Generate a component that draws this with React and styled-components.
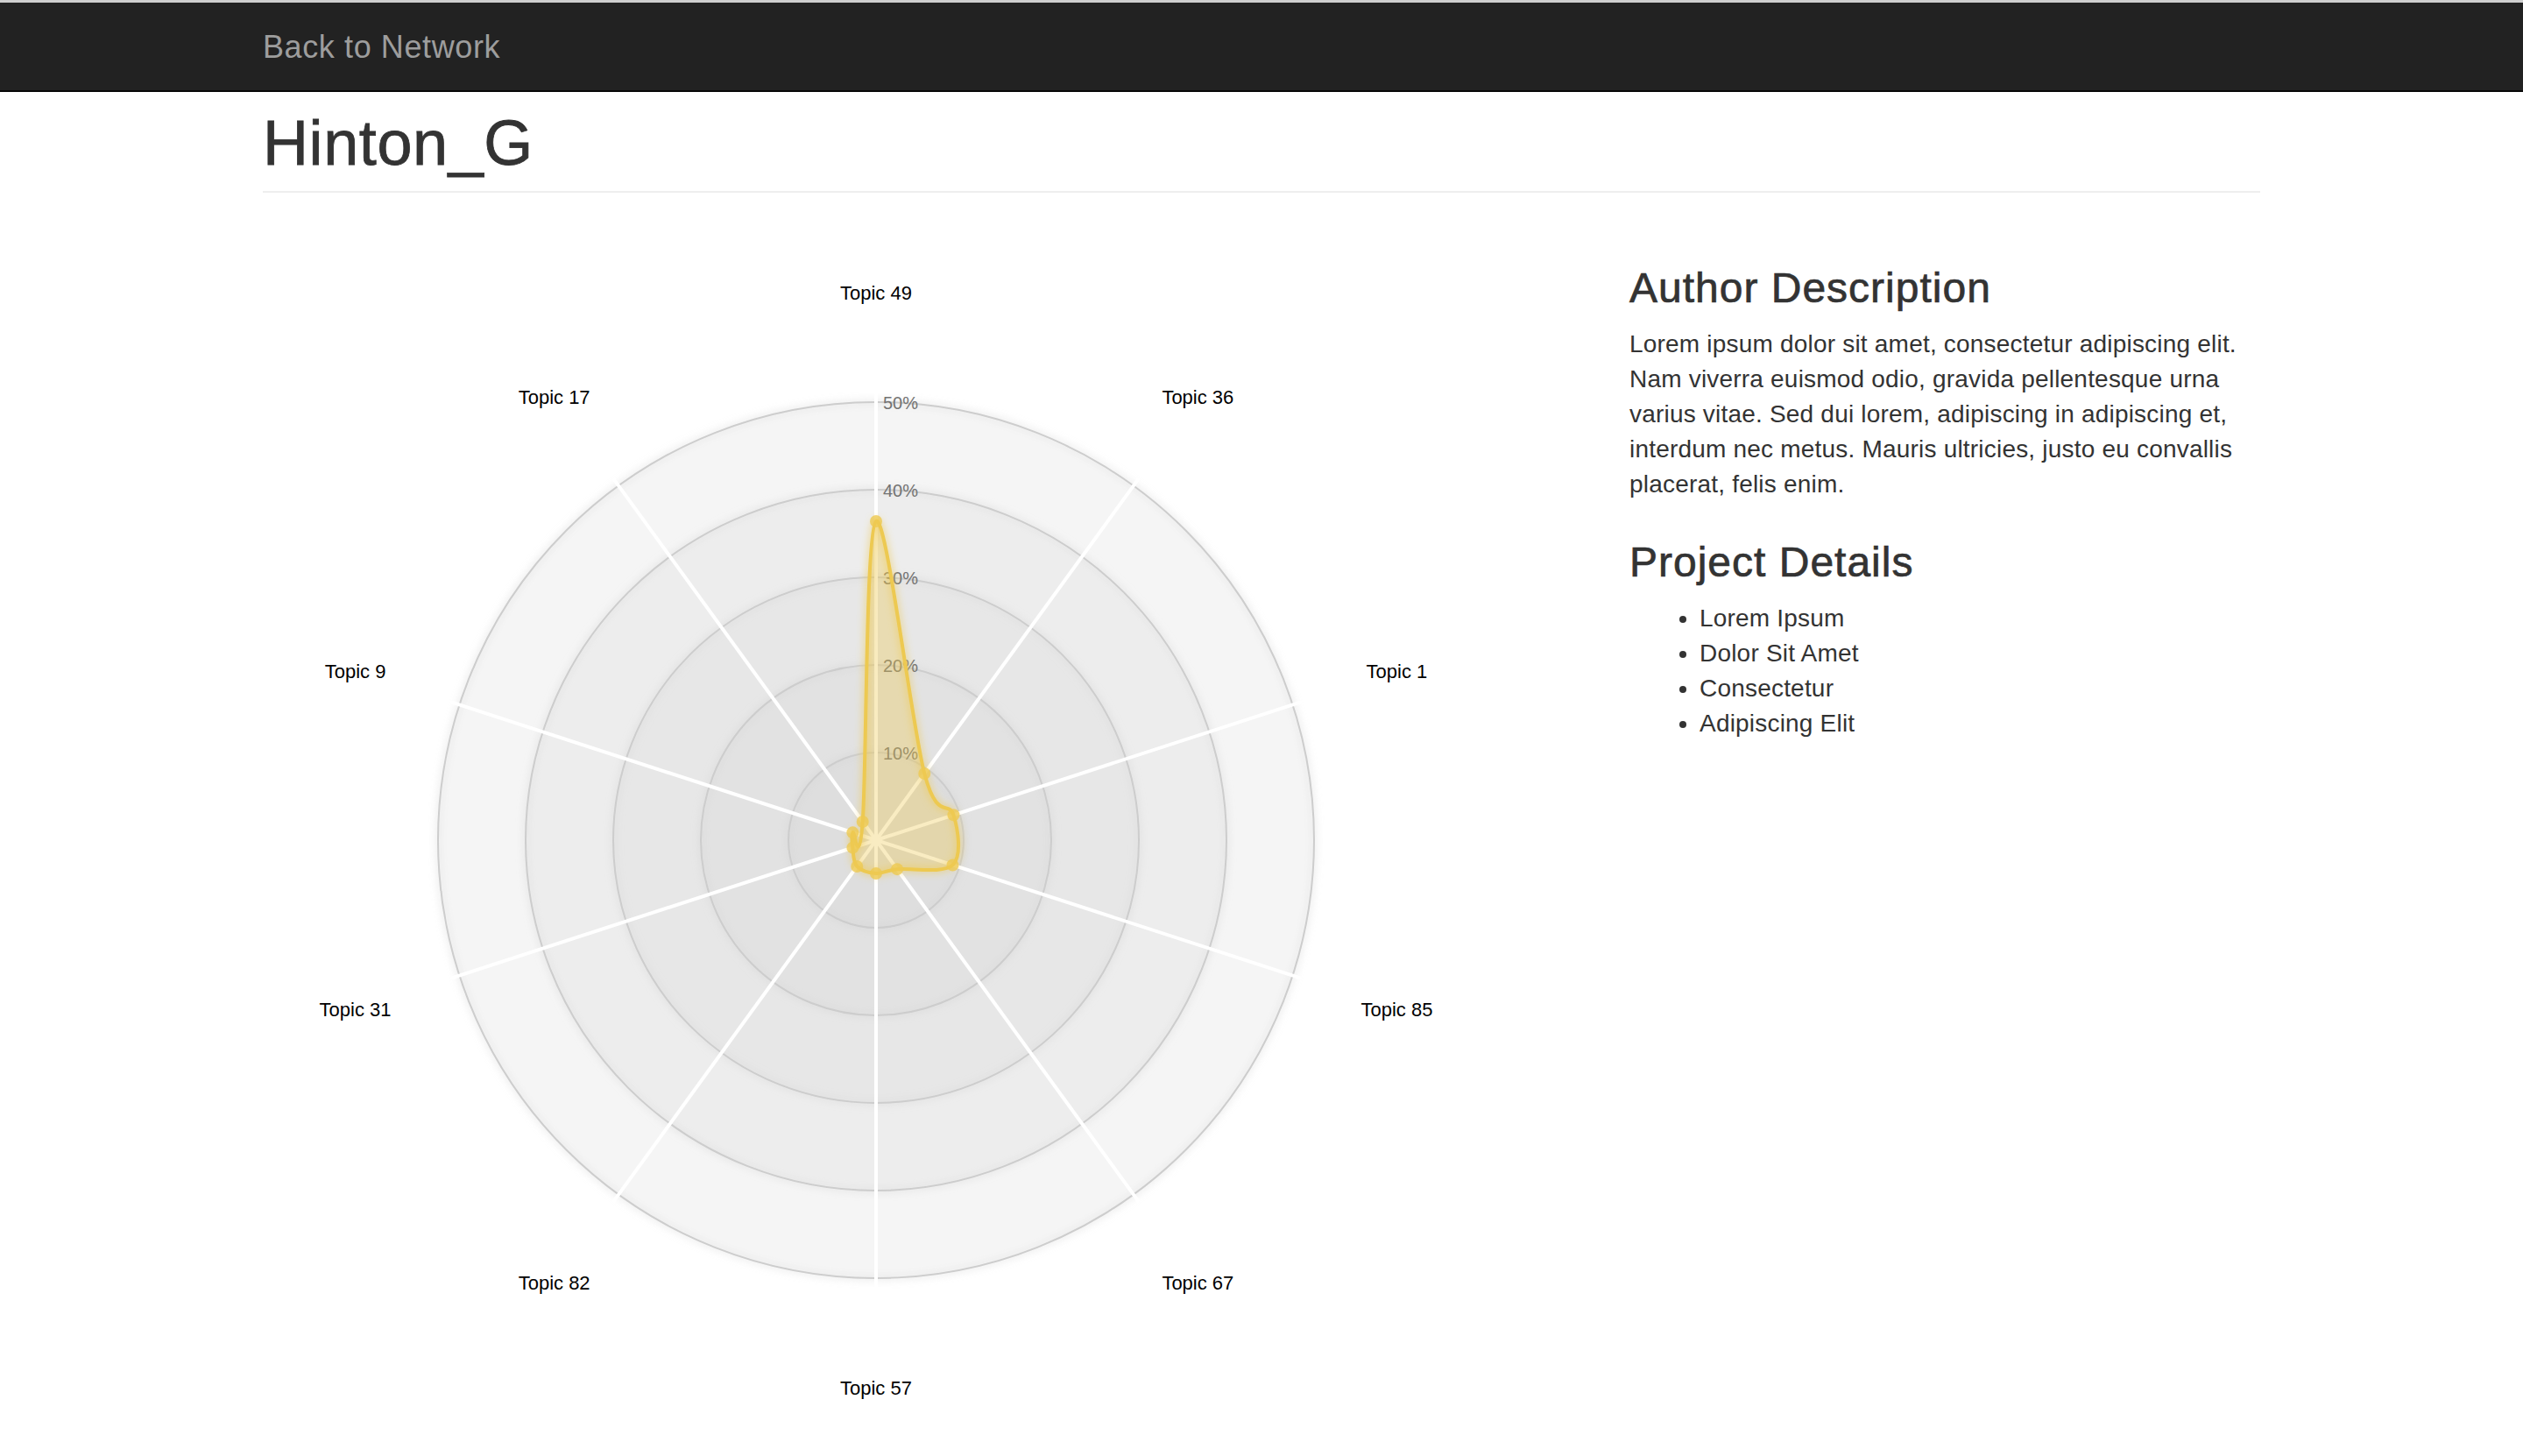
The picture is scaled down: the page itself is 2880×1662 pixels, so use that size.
import React from "react";
import styled, { createGlobalStyle } from "styled-components";

const GlobalStyle = createGlobalStyle`
  body {
    margin: 0;
    background: #fff;
    color: #333;
    font-family: "Liberation Sans", Arial, Helvetica, sans-serif;
  }
`;

const TopEdge = styled.div`
  height: 3px;
  background: #cfcfcf;
`;

const Navbar = styled.nav`
  background: #222;
  border-bottom: 2px solid #080808;
  height: 100px;
`;

const Container = styled.div`
  width: 2280px;
  margin: 0 auto;
  padding: 0 30px;
`;

const Brand = styled.a`
  display: inline-block;
  color: #9d9d9d;
  font-size: 36px;
  line-height: 40px;
  letter-spacing: 0.6px;
  padding-top: 31px;
  text-decoration: none;
`;

const PageHeader = styled.div`
  margin-top: 18px;
  padding-bottom: 15px;
  border-bottom: 2px solid #eee;
`;

const Title = styled.h1`
  margin: 0;
  font-size: 72px;
  font-weight: 500;
  line-height: 80px;
  letter-spacing: 0.6px;
  color: #333;
  -webkit-text-stroke: 0.8px #333;
`;

const Row = styled.div`
  display: grid;
  grid-template-columns: 1500px 720px;
  column-gap: 60px;
  margin-top: 39px;
`;

const ChartCol = styled.div`
  svg {
    display: block;
  }
`;

const InfoCol = styled.div``;

const SectionTitle = styled.h3`
  margin: ${(p) => (p.$first ? "43px" : "42px")} 0 18px;
  font-size: 48px;
  font-weight: 500;
  line-height: 53px;
  letter-spacing: 1px;
  color: #333;
  -webkit-text-stroke: 0.7px #333;
`;

const Body = styled.p`
  margin: 0 0 20px;
  font-size: 28px;
  line-height: 40px;
  letter-spacing: 0.2px;
`;

const List = styled.ul`
  margin: 0;
  padding-left: 80px;
  font-size: 28px;
  line-height: 40px;
  letter-spacing: 0.2px;
`;

const topics = [
  { axis: "Topic 49", value: 0.364 },
  { axis: "Topic 36", value: 0.094 },
  { axis: "Topic 1", value: 0.093 },
  { axis: "Topic 85", value: 0.092 },
  { axis: "Topic 67", value: 0.041 },
  { axis: "Topic 57", value: 0.038 },
  { axis: "Topic 82", value: 0.037 },
  { axis: "Topic 31", value: 0.028 },
  { axis: "Topic 9", value: 0.028 },
  { axis: "Topic 17", value: 0.026 },
];

// closed cardinal spline, tension 0 (same as d3.curveCardinalClosed)
const cardinalClosed = (pts) => {
  const n = pts.length;
  const k = 1 / 6;
  let d = `M${pts[0][0]},${pts[0][1]}`;
  for (let i = 0; i < n; i++) {
    const p0 = pts[(i - 1 + n) % n];
    const p1 = pts[i];
    const p2 = pts[(i + 1) % n];
    const p3 = pts[(i + 2) % n];
    const c1 = [p1[0] + (p2[0] - p0[0]) * k, p1[1] + (p2[1] - p0[1]) * k];
    const c2 = [p2[0] - (p3[0] - p1[0]) * k, p2[1] - (p3[1] - p1[1]) * k];
    d += `C${c1[0]},${c1[1]} ${c2[0]},${c2[1]} ${p2[0]},${p2[1]}`;
  }
  return d + "Z";
};

const RadarChart = ({ data }) => {
  const size = 1400;
  const cx = 700;
  const cy = 700;
  const radius = 500;
  const maxValue = 0.5;
  const levels = 5;
  const slice = (Math.PI * 2) / data.length;
  const color = "#EDC951";

  const at = (r, i) => [
    cx + r * Math.cos(slice * i - Math.PI / 2),
    cy + r * Math.sin(slice * i - Math.PI / 2),
  ];

  const pts = data.map((d, i) => at((d.value / maxValue) * radius, i));
  const blob = cardinalClosed(pts);
  const rings = [5, 4, 3, 2, 1];

  return (
    <svg width={size} height={size}>
      <defs>
        <filter id="glow">
          <feGaussianBlur stdDeviation="5" result="coloredBlur" />
          <feMerge>
            <feMergeNode in="coloredBlur" />
            <feMergeNode in="SourceGraphic" />
          </feMerge>
        </filter>
      </defs>

      {rings.map((l) => (
        <circle
          key={l}
          cx={cx}
          cy={cy}
          r={(radius / levels) * l}
          fill="#CDCDCD"
          fillOpacity="0.1"
          stroke="#CDCDCD"
          strokeWidth="2"
          filter="url(#glow)"
        />
      ))}

      {rings.map((l) => (
        <text
          key={l}
          x={cx + 8}
          y={cy - (radius / levels) * l}
          dy="0.4em"
          fontSize="20"
          fill="#737373"
          fontFamily="Liberation Sans, Arial, sans-serif"
        >
          {l * 10}%
        </text>
      ))}

      {data.map((d, i) => {
        const [x2, y2] = at(radius * 1.02, i);
        const [lx, ly] = at(radius * 1.25, i);
        return (
          <g key={d.axis}>
            <line x1={cx} y1={cy} x2={x2} y2={y2} stroke="#fff" strokeWidth="4" />
            <text
              x={lx}
              y={ly}
              dy="0.35em"
              textAnchor="middle"
              fontSize="22"
              fill="#000"
              fontFamily="Liberation Sans, Arial, sans-serif"
            >
              {d.axis}
            </text>
          </g>
        );
      })}

      <path d={blob} fill={color} fillOpacity="0.35" />
      <path
        d={blob}
        fill="none"
        stroke={color}
        strokeWidth="4"
        filter="url(#glow)"
      />
      {pts.map((p, i) => (
        <circle key={i} cx={p[0]} cy={p[1]} r="7" fill={color} fillOpacity="0.8" />
      ))}
    </svg>
  );
};

export default function App() {
  return (
    <>
      <GlobalStyle />
      <TopEdge />
      <Navbar>
        <Container>
          <Brand href="#">Back to Network</Brand>
        </Container>
      </Navbar>
      <Container>
        <PageHeader>
          <Title>Hinton_G</Title>
        </PageHeader>
        <Row>
          <ChartCol>
            <RadarChart data={topics} />
          </ChartCol>
          <InfoCol>
            <SectionTitle $first>Author Description</SectionTitle>
            <Body>
              Lorem ipsum dolor sit amet, consectetur adipiscing elit. Nam viverra
              euismod odio, gravida pellentesque urna varius vitae. Sed dui lorem,
              adipiscing in adipiscing et, interdum nec metus. Mauris ultricies,
              justo eu convallis placerat, felis enim.
            </Body>
            <SectionTitle>Project Details</SectionTitle>
            <List>
              <li>Lorem Ipsum</li>
              <li>Dolor Sit Amet</li>
              <li>Consectetur</li>
              <li>Adipiscing Elit</li>
            </List>
          </InfoCol>
        </Row>
      </Container>
    </>
  );
}
